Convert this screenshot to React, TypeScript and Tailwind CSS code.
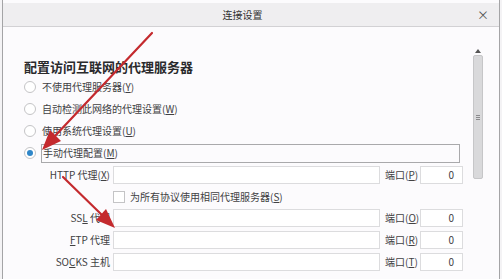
import React from "react";

const U = ({ children }: { children: React.ReactNode }) => (
  <span className="underline underline-offset-1">{children}</span>
);

function Radio({ checked = false }: { checked?: boolean }) {
  return (
    <span className="flex h-[12px] w-[12px] shrink-0 items-center justify-center rounded-full border border-[#c4c4c6] bg-white">
      {checked && <span className="h-[6px] w-[6px] rounded-full bg-[#2f86c8]" />}
    </span>
  );
}

function ProxyRow({ label, port }: { label: React.ReactNode; port: React.ReactNode }) {
  return (
    <div className="flex h-[18px] items-center">
      <div className="w-[86px] text-right">{label}</div>
      <div className="ml-[3px] h-[18px] w-[267px] border border-[#dcdcde] bg-white" />
      <div className="ml-[5px] w-[33px] whitespace-nowrap">{port}</div>
      <div className="ml-[2px] flex h-[18px] w-[43px] items-center justify-end border border-[#dcdcde] bg-white pr-[8px]">
        0
      </div>
    </div>
  );
}

export default function App() {
  return (
    <div
      className="relative h-[279px] w-[502px] overflow-hidden bg-[#f4f3f5] text-[10px] leading-[14px] text-[#414143]"
      style={{ fontFamily: '"Noto Sans CJK SC", "Noto Sans", sans-serif' }}
    >
      <div className="ml-[2px] mr-[2px] flex h-full flex-col border-x border-[#a4a4a6] bg-[#fcfbfd]">
        {/* header */}
        <div className="mt-[3px] flex h-[24px] shrink-0 items-center border-b border-[#d2d1d4] bg-[#efeef0]">
          <div className="flex-1 pl-[5px] text-center text-[10px] text-[#333]">连接设置</div>
          <div className="w-[22px] text-[12px] leading-none text-[#555]">×</div>
        </div>

        {/* body */}
        <div className="flex flex-1">
          <div className="flex-1 pl-[21px] pt-[31px]">
            <div className="h-[18px] text-[13px] font-bold leading-[18px] text-[#2a2a2c]">
              配置访问互联网的代理服务器
            </div>
            <div className="flex h-[22px] items-center gap-[6px]">
              <Radio />
              <span>
                不使用代理服务器(<U>Y</U>)
              </span>
            </div>
            <div className="flex h-[22px] items-center gap-[6px]">
              <Radio />
              <span>
                自动检测此网络的代理设置(<U>W</U>)
              </span>
            </div>
            <div className="flex h-[22px] items-center gap-[6px]">
              <Radio />
              <span>
                使用系统代理设置(<U>U</U>)
              </span>
            </div>
            <div className="flex h-[22px] items-center gap-[5px]">
              <Radio checked />
              <span className="flex h-[19px] w-[419px] items-center border border-[#a9a9ab] pl-[1px]">
                手动代理配置(<U>M</U>)
              </span>
            </div>

            <div className="mt-[2px] flex flex-col">
              <ProxyRow
                label={
                  <>
                    HTTP 代理(<U>X</U>)
                  </>
                }
                port={
                  <>
                    端口(<U>P</U>)
                  </>
                }
              />
              <div className="flex h-[25px] items-center pl-[89px]">
                <span className="h-[12px] w-[12px] border border-[#c4c4c6] bg-white" />
                <span className="ml-[5px]">
                  为所有协议使用相同代理服务器(<U>S</U>)
                </span>
              </div>
              <div className="flex flex-col gap-[4px]">
                <ProxyRow
                  label={
                    <>
                      SS<U>L</U> 代理
                    </>
                  }
                  port={
                    <>
                      端口(<U>O</U>)
                    </>
                  }
                />
                <ProxyRow
                  label={
                    <>
                      <U>F</U>TP 代理
                    </>
                  }
                  port={
                    <>
                      端口(<U>R</U>)
                    </>
                  }
                />
                <ProxyRow
                  label={
                    <>
                      SO<U>C</U>KS 主机
                    </>
                  }
                  port={
                    <>
                      端口(<U>T</U>)
                    </>
                  }
                />
              </div>
            </div>
          </div>

          {/* scrollbar */}
          <div className="mr-[16px] mt-[20px] flex h-[132px] w-[10px] flex-col items-center">
            <div className="flex h-[8px] w-full items-center justify-center">
              <svg width="6" height="4" viewBox="0 0 6 4">
                <path d="M0 4 L3 0 L6 4 Z" fill="#555" />
              </svg>
            </div>
            <div className="flex w-full flex-1 items-center justify-center rounded-[2px] border border-[#c6c6c8] bg-[#d9d9db]">
              <div className="flex flex-col gap-[1px]">
                <span className="h-px w-[4px] bg-[#8a8a8c]" />
                <span className="h-px w-[4px] bg-[#8a8a8c]" />
                <span className="h-px w-[4px] bg-[#8a8a8c]" />
              </div>
            </div>
          </div>
        </div>
      </div>

      {/* annotation arrows */}
      <svg className="pointer-events-none absolute left-0 top-0" width="502" height="279" viewBox="0 0 502 279">
        <line x1="152" y1="33" x2="54" y2="137" stroke="#c42a2e" strokeWidth="2.2" strokeLinecap="round" />
        <polygon points="42,150 61,141 50,130" fill="#c42a2e" />
        <line x1="63" y1="177" x2="103" y2="216" stroke="#c42a2e" strokeWidth="2.2" strokeLinecap="round" />
        <polygon points="115,228 96,220 106,209" fill="#c42a2e" />
      </svg>
    </div>
  );
}
